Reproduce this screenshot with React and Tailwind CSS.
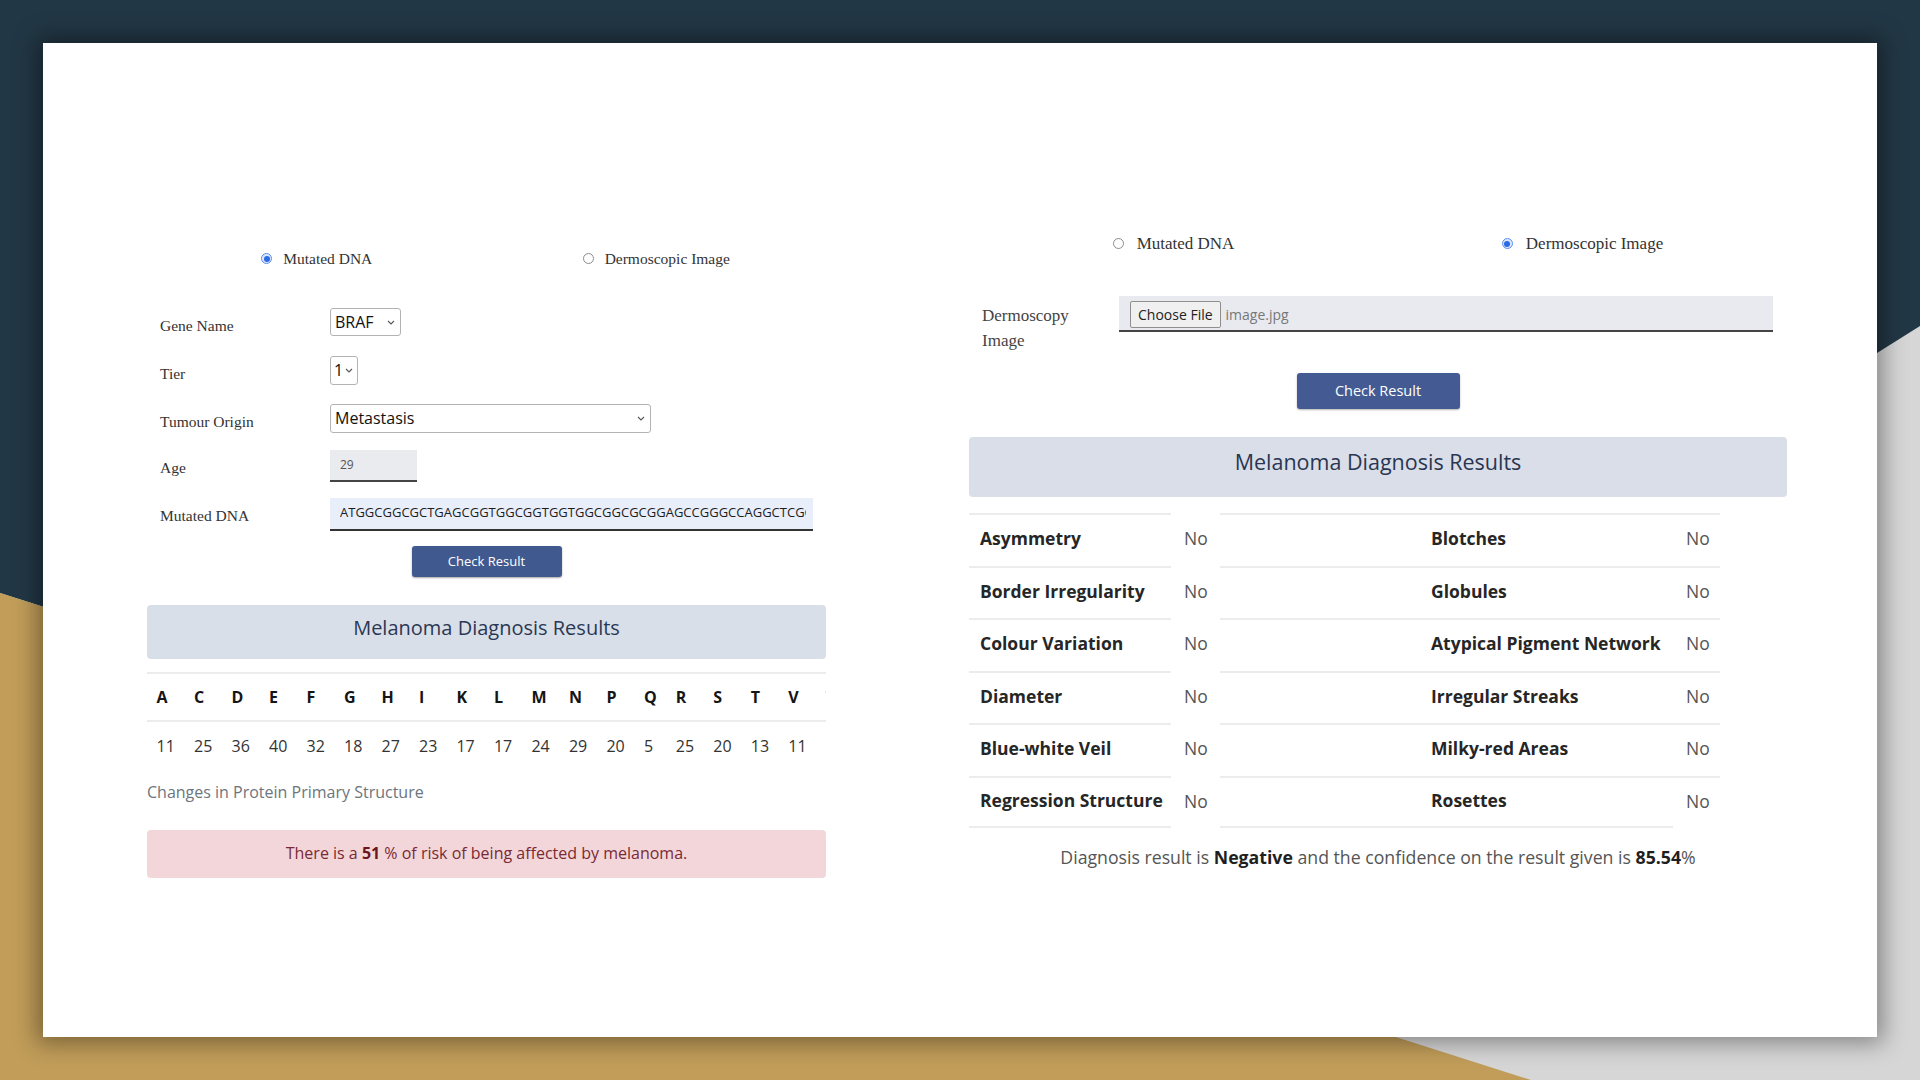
import React from "react";

const SANS = { fontFamily: '"Open Sans", "Noto Sans", sans-serif' };
const SERIF = { fontFamily: '"Liberation Serif", "Times New Roman", serif' };

function Chevron() {
  return (
    <svg width="8" height="5" viewBox="0 0 8 5" fill="none">
      <path d="M1 1l3 3 3-3" stroke="#555" strokeWidth="1.1" />
    </svg>
  );
}

function Radio({ checked }) {
  return checked ? (
    <span className="flex h-[11px] w-[11px] shrink-0 items-center justify-center rounded-full border border-[#5b8ff0] bg-[#dbe7fd]">
      <span className="h-[6px] w-[6px] rounded-full bg-[#2a6ae6]" />
    </span>
  ) : (
    <span className="h-[11px] w-[11px] shrink-0 rounded-full border border-[#8c8c8c] bg-white" />
  );
}

const letters = ["A", "C", "D", "E", "F", "G", "H", "I", "K", "L", "M", "N", "P", "Q", "R", "S", "T", "V", "W", "Y"];
const counts = ["11", "25", "36", "40", "32", "18", "27", "23", "17", "17", "24", "29", "20", "5", "25", "20", "13", "11", "21", "9"];

const rows = [
  ["Asymmetry", "Blotches"],
  ["Border Irregularity", "Globules"],
  ["Colour Variation", "Atypical Pigment Network"],
  ["Diameter", "Irregular Streaks"],
  ["Blue-white Veil", "Milky-red Areas"],
  ["Regression Structure", "Rosettes"],
];

function LeftPanel() {
  return (
    <div className="ml-[104px] mt-[204px] w-[679px] shrink-0">
      <div className="grid h-[20px] grid-cols-2 items-center text-[15.5px] text-[#333]" style={SERIF}>
        <div className="flex items-center justify-center gap-[11px]">
          <Radio checked />
          <span>Mutated DNA</span>
        </div>
        <div className="flex items-center justify-center gap-[11px]">
          <Radio />
          <span>Dermoscopic Image</span>
        </div>
      </div>

      <div className="mt-[31px]">
        <div className="flex h-[48px] items-center">
          <div className="w-[183px] pl-[13px] pt-[7px] text-[15.5px] text-[#333]" style={SERIF}>Gene Name</div>
          <div className="flex h-[28px] w-[71px] items-center justify-between rounded-[3px] border border-[#b3b3b3] bg-white pl-[4px] pr-[5px] text-[16px] text-[#111]" style={SANS}>
            BRAF
            <Chevron />
          </div>
        </div>
        <div className="flex h-[48px] items-center">
          <div className="w-[183px] pl-[13px] pt-[7px] text-[15.5px] text-[#333]" style={SERIF}>Tier</div>
          <div className="flex h-[29px] w-[28px] items-center justify-between rounded-[3px] border border-[#b3b3b3] bg-white pl-[3px] pr-[4px] text-[16px] text-[#111]" style={SANS}>
            1
            <Chevron />
          </div>
        </div>
        <div className="flex h-[48px] items-center">
          <div className="w-[183px] pl-[13px] pt-[7px] text-[15.5px] text-[#333]" style={SERIF}>Tumour Origin</div>
          <div className="flex h-[29px] w-[321px] items-center justify-between rounded-[3px] border border-[#b3b3b3] bg-white pl-[4px] pr-[5px] text-[16px] text-[#111]" style={SANS}>
            Metastasis
            <Chevron />
          </div>
        </div>
        <div className="flex h-[48px] items-center">
          <div className="w-[183px] pl-[13px] pt-[4px] text-[15.5px] text-[#333]" style={SERIF}>Age</div>
          <div className="flex h-[32px] w-[87px] items-center border-b-2 border-[#444] bg-[#e9ebef] pl-[10px] text-[12px] text-[#555]" style={SANS}>
            29
          </div>
        </div>
        <div className="flex h-[48px] items-center">
          <div className="w-[183px] pl-[13px] pt-[4px] text-[15.5px] text-[#333]" style={SERIF}>Mutated DNA</div>
          <div className="flex h-[33px] w-[483px] items-center border-b-2 border-[#333] bg-[#e8eefa] pl-[10px] pr-[7px]" style={SANS}>
            <div className="overflow-hidden whitespace-nowrap text-[13px] font-medium text-[#1d1d1d]">
              ATGGCGGCGCTGAGCGGTGGCGGTGGTGGCGGCGCGGAGCCGGGCCAGGCTCGGAGCAGCCGCAGCG
            </div>
          </div>
        </div>
      </div>

      <button className="mx-auto mt-[8px] flex h-[31px] w-[150px] items-center justify-center rounded-[3px] bg-[#40598f] text-[13px] text-white shadow-[0_1px_2px_rgba(0,0,0,0.35)]" style={SANS}>
        Check Result
      </button>

      <div className="mt-[28px] flex h-[54px] items-center justify-center rounded-[4px] bg-[#d9dfe9] pb-[9px] text-[20px] font-medium text-[#2a3853]" style={SANS}>
        Melanoma Diagnosis Results
      </div>

      <div className="mt-[13px] w-full overflow-hidden" style={SANS}>
        <table className="w-max border-collapse">
          <tbody>
            <tr className="border-t-2 border-[#ececec]">
              {letters.map((l) => (
                <td key={l} className="h-[48px] px-[9.6px] text-left align-middle text-[16px] font-bold text-[#151515]">
                  {l}
                </td>
              ))}
            </tr>
            <tr className="border-t-2 border-[#ececec]">
              {counts.map((c, i) => (
                <td key={i} className="h-[48px] px-[9.6px] text-left align-middle text-[16px] text-[#333]">
                  {c}
                </td>
              ))}
            </tr>
          </tbody>
        </table>
      </div>

      <div className="mt-[11px] h-[24px] text-[16px] leading-[24px] text-[#6c757d]" style={SANS}>
        Changes in Protein Primary Structure
      </div>

      <div className="mt-[26px] flex h-[48px] items-center justify-center rounded-[4px] bg-[#f3d6da] pb-[2px] text-[16px] text-[#7a2a33]" style={SANS}>
        <span>
          There is a <b className="font-bold text-[#6b1620]">51</b> % of risk of being affected by melanoma.
        </span>
      </div>
    </div>
  );
}

function RightPanel() {
  return (
    <div className="ml-[143px] mt-[188px] w-[818px] shrink-0">
      <div className="grid h-[20px] grid-cols-2 items-center text-[17px] text-[#333]" style={SERIF}>
        <div className="flex items-center justify-center gap-[13px]">
          <Radio />
          <span>Mutated DNA</span>
        </div>
        <div className="flex items-center justify-center gap-[13px]">
          <Radio checked />
          <span>Dermoscopic Image</span>
        </div>
      </div>

      <div className="mt-[45px] flex h-[58px] items-start">
        <div className="w-[150px] pl-[13px] pt-[7px] text-[17px] leading-[25px] text-[#444]" style={SERIF}>
          Dermoscopy
          <br />
          Image
        </div>
        <div className="flex h-[36px] w-[654px] items-center border-b-2 border-[#444] bg-[#e8eaef] pl-[11px] pt-[2px]" style={SANS}>
          <span className="flex h-[27px] items-center rounded-[2px] border border-[#8f8f8f] bg-[#f0f0f0] px-[7px] text-[14px] text-[#222]">
            Choose File
          </span>
          <span className="ml-[5px] text-[14px] text-[#777]">image.jpg</span>
        </div>
      </div>

      <button className="mx-auto mt-[19px] flex h-[36px] w-[163px] items-center justify-center rounded-[3px] bg-[#435b92] text-[14.5px] text-white shadow-[0_1px_2px_rgba(0,0,0,0.3)]" style={SANS}>
        Check Result
      </button>

      <div className="mt-[28px] flex h-[60px] items-center justify-center rounded-[4px] bg-[#d9dee9] pb-[9px] text-[21.5px] font-medium text-[#2a3651]" style={SANS}>
        Melanoma Diagnosis Results
      </div>

      <div className="mt-[16px]" style={SANS}>
        {rows.map(([a, b], i) => {
          const last = i === rows.length - 1;
          const bb = last ? " border-b-2" : "";
          return (
            <div key={a} className="grid grid-cols-[202px_49px_202px_251px_47px] text-[17.5px]">
              <div className={"flex h-[52.5px] items-center border-t-2 border-[#ececec] pb-[4px] pl-[11px] font-bold text-[#262626]" + bb}>{a}</div>
              <div className="flex h-[52.5px] items-center pb-[2px] pl-[13px] text-[#555]">No</div>
              <div className={"h-[52.5px] border-t-2 border-[#ececec]" + bb} />
              <div className={"flex h-[52.5px] items-center border-t-2 border-[#ececec] pb-[4px] pl-[9px] font-bold text-[#262626]" + bb}>{b}</div>
              <div className="flex h-[52.5px] items-center border-t-2 border-[#ececec] pb-[4px] pl-[13px] text-[#555]">No</div>
            </div>
          );
        })}
      </div>

      <div className="mt-[17px] h-[24px] text-center text-[17.7px] leading-[24px] text-[#555]" style={SANS}>
        Diagnosis result is <b className="font-bold text-[#1f1f1f]">Negative</b> and the confidence on the result given is{" "}
        <b className="font-bold text-[#1f1f1f]">85.54</b>%
      </div>
    </div>
  );
}

export default function App() {
  return (
    <div className="relative h-[1080px] w-[1920px] overflow-hidden bg-[#d6d6d6]">
      <svg className="absolute inset-0" width="1920" height="1080" viewBox="0 0 1920 1080">
        <polygon points="0,0 1920,0 1920,326 992,909 0,593" fill="#223745" />
        <polygon points="0,593 1531,1080 0,1080" fill="#c19d59" />
      </svg>
      <div className="relative p-[43px]">
        <div className="flex h-[994px] w-[1834px] items-start bg-white shadow-[0_0_22px_6px_rgba(0,0,0,0.38)]">
          <LeftPanel />
          <RightPanel />
        </div>
      </div>
    </div>
  );
}
